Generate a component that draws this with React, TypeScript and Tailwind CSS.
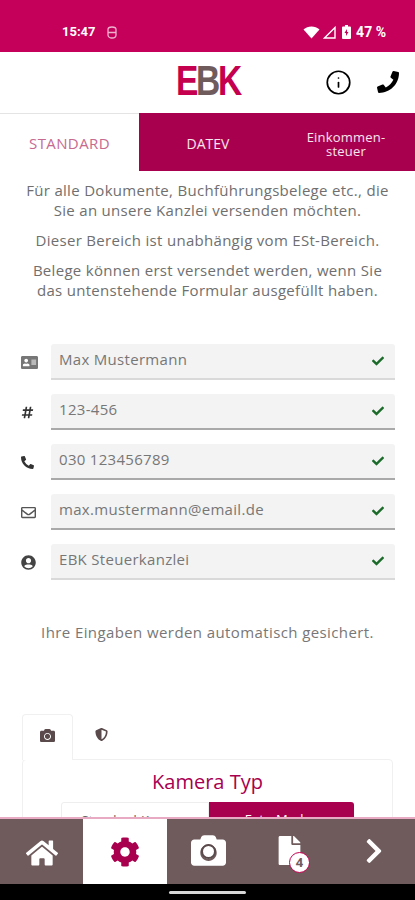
import { FaHome, FaCog, FaCamera, FaFile, FaChevronRight, FaAddressCard, FaHashtag, FaPhone, FaPhoneAlt, FaRegEnvelope, FaUserCircle, FaCheck, FaShieldAlt } from 'react-icons/fa';
import { Info } from 'lucide-react';

const fields = [
  { icon: FaAddressCard, size: 17, tone: 'text-[#777777]', value: 'Max Mustermann', line: 'border-[#d9d9d9]' },
  { icon: FaHashtag, size: 13, tone: 'text-[#333333]', value: '123-456', line: 'border-[#a9a9a9]' },
  { icon: FaPhoneAlt, size: 13, tone: 'text-[#333333]', value: '030 123456789', line: 'border-[#a9a9a9]' },
  { icon: FaRegEnvelope, size: 15, tone: 'text-[#555555]', value: 'max.mustermann@email.de', line: 'border-[#a9a9a9]' },
  { icon: FaUserCircle, size: 15, tone: 'text-[#444444]', value: 'EBK Steuerkanzlei', line: 'border-[#d9d9d9]' },
];

const App = () => (
  <div className="h-[900px] w-[415px] flex flex-col overflow-hidden bg-white font-['Open_Sans',sans-serif]">

    {/* Status bar */}
    <div className="h-[52px] shrink-0 bg-[#c4005a] flex items-end justify-between pb-[12px] pl-[62px] pr-[29px] text-white">
      <div className="flex items-center gap-[11px] text-[13px] font-bold leading-4 font-['Roboto',sans-serif]">
        <span>15:47</span>
        <svg width="10" height="13" viewBox="0 0 10 13" fill="none" stroke="white" strokeWidth="1.3" className="opacity-70">
          <path d="M1 3.5C1 1.8 3 1 5 1s4 .8 4 2.5V9c0 2-2 3-4 3s-4-1-4-3ZM1 6.5h8" />
        </svg>
      </div>
      <div className="flex items-center gap-[3px] text-[14px] font-bold leading-4 font-['Roboto',sans-serif]">
        <svg width="17" height="13" viewBox="0 0 17 13" fill="white">
          <path d="M.5 3.6C2.7 1.6 5.5.5 8.5.5s5.800 1.100 8 3.100L8.500 12.500Z" />
        </svg>
        <svg width="13" height="13" viewBox="0 0 13 13" fill="none" stroke="white" strokeWidth="1.4">
          <path d="M1.500 12H12V1.500Z" />
        </svg>
        <svg width="9" height="14" viewBox="0 0 9 14" fill="white" className="ml-[3px] mr-[2px]">
          <path d="M3 0h3v1.500h2a1 1 0 0 1 1 1V13a1 1 0 0 1-1 1H1a1 1 0 0 1-1-1V2.500a1 1 0 0 1 1-1h2Z" />
          <path d="M5 4 2.500 8H4v3l2.500-4H5Z" fill="#c4005a" />
        </svg>
        <span>47 %</span>
      </div>
    </div>

    {/* Header */}
    <div className="h-[61px] shrink-0 relative flex items-center justify-center">
      <div className="flex items-baseline text-[43px] font-bold leading-none tracking-[-3px] font-['Liberation_Sans',sans-serif] mt-[-4px] scale-x-[0.78]">
        <span className="text-[#c4004f]">E</span>
        <span className="text-[#6f5a5c]">B</span>
        <span className="text-[#c4004f]">K</span>
      </div>
      <Info size={27} strokeWidth={1.5} className="absolute left-[325px] top-[17px] text-black" />
      <FaPhone size={22} className="absolute left-[377px] top-[19px] text-black" />
    </div>

    {/* Tabs */}
    <div className="h-[58px] shrink-0 flex text-center">
      <div className="w-[139px] border-t border-[#e4e4e4] flex items-center justify-center pt-[2px] text-[15px] tracking-[0.4px] text-[#c76a8f]">
        STANDARD
      </div>
      <div className="flex-1 bg-[#a8004f] flex items-center text-white/90 font-medium">
        <div className="flex-1 text-[14px] pt-[2px]">DATEV</div>
        <div className="flex-1 text-[13px] leading-[14px] tracking-[0.2px] pt-[4px]">Einkommen-<br />steuer</div>
      </div>
    </div>

    <div className="flex-1 overflow-hidden">
      {/* Intro */}
      <div className="px-[14px] pt-[9px] text-center text-[15px] leading-[20px] tracking-[0.3px] text-[#6f6f6f]">
        <p>Für alle Dokumente, Buchführungsbelege etc., die<br />Sie an unsere Kanzlei versenden möchten.</p>
        <p className="mt-[10px]">Dieser Bereich ist unabhängig vom ESt-Bereich.</p>
        <p className="mt-[10px]">Belege können erst versendet werden, wenn Sie<br />das untenstehende Formular ausgefüllt haben.</p>
      </div>

      {/* Form */}
      <div className="mt-[44px] pl-[20px] pr-[20px] flex flex-col gap-[14px]">
        {fields.map(f => (
          <div key={f.value} className="flex items-center">
            <div className={`w-[31px] shrink-0 pl-[1px] ${f.tone}`}><f.icon size={f.size} /></div>
            <div className={`flex-1 h-[36px] bg-[#f3f3f3] rounded-t-[3px] border-b-2 ${f.line} flex items-center justify-between pl-[8px] pr-[11px] text-[15px] tracking-[0.3px] text-[#777777]`}>
              <span className="-mt-[3px]">{f.value}</span>
              <FaCheck size={12} className="text-[#1b6b2a]" />
            </div>
          </div>
        ))}
      </div>

      <p className="mt-[43px] text-center text-[15px] leading-[19px] tracking-[0.4px] text-[#777777]">Ihre Eingaben werden automatisch gesichert.</p>

      {/* Camera panel */}
      <div className="mt-[72px] mx-[22px]">
        <div className="flex">
          <div className="w-[51px] h-[46px] -mb-[1px] relative bg-white border border-b-0 border-[#f0f0f0] rounded-t-[4px] flex items-center justify-center pb-[4px] text-[#5a4a4c]">
            <FaCamera size={15} />
          </div>
          <div className="w-[56px] h-[45px] flex items-center justify-center pb-[4px] text-[#5a4a4c]">
            <FaShieldAlt size={13} />
          </div>
        </div>
        <div className="border border-[#f0f0f0] rounded-[4px] h-[120px]">
          <h2 className="mt-[9px] text-center text-[20px] leading-[26px] text-[#a8004f]">Kamera Typ</h2>
          <div className="mt-[7px] mx-[38px] flex h-[40px] text-[13px]">
            <div className="flex-1 border border-[#eeeeee] rounded-l-[3px] pt-[8px] text-center text-[#666666]">Standard-Kamera</div>
            <div className="flex-1 bg-[#a8004f] rounded-r-[3px] pt-[8px] text-center text-white">Foto-Modus</div>
          </div>
        </div>
      </div>
    </div>

    {/* Bottom nav */}
    <div className="h-[67px] shrink-0 bg-[#6f5a5c] border-t-2 border-[#e8a9c2] flex text-white">
      <div className="w-[83px] flex items-center justify-center pt-[2px]"><FaHome size={32} /></div>
      <div className="w-[84px] bg-white flex items-center justify-center pt-[1px] text-[#a8004f]"><FaCog size={30} /></div>
      <div className="w-[83px] flex items-center justify-center pb-[2px]">
        <div className="relative flex items-center justify-center">
          <FaCamera size={35} />
          <div className="absolute w-[15px] h-[15px] rounded-full bg-white border-[2px] border-[#5a4a4c] top-[11px]" />
        </div>
      </div>
      <div className="w-[83px] flex items-center justify-center pb-[2px]">
        <div className="relative -ml-[4px]">
          <FaFile size={29} />
          <div className="absolute left-[14px] top-[16px] w-[21px] h-[21px] rounded-full bg-white border border-[#c4004f] flex items-center justify-center text-[13px] font-bold leading-none text-[#6f5a5c]">4</div>
        </div>
      </div>
      <div className="flex-1 flex items-center justify-center pb-[2px]"><FaChevronRight size={28} /></div>
    </div>

    {/* Gesture bar */}
    <div className="h-[16px] shrink-0 bg-black flex items-center justify-center">
      <div className="w-[77px] h-[3px] rounded-full bg-[#d8d8d8]" />
    </div>
  </div>
);

export default App;
